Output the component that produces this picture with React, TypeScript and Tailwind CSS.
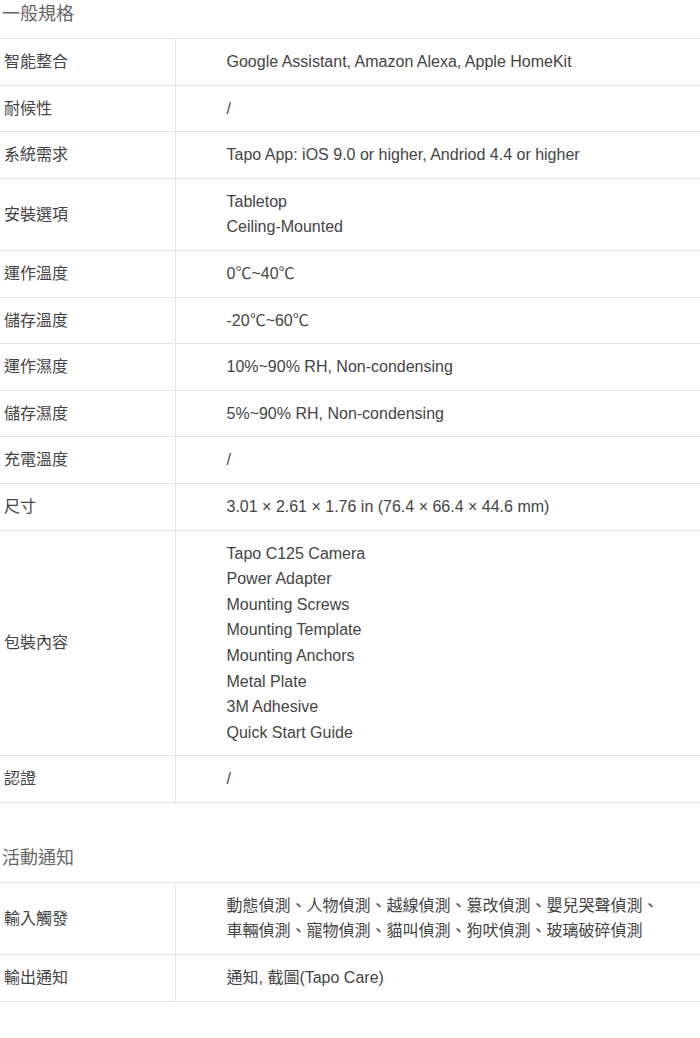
const FONT = '[font-family:"Liberation_Sans","Noto_Sans_CJK_TC",sans-serif]'

type Row = { label: string; value: string[] }

const general: Row[] = [
  { label: '智能整合', value: ['Google Assistant, Amazon Alexa, Apple HomeKit'] },
  { label: '耐候性', value: ['/'] },
  { label: '系統需求', value: ['Tapo App: iOS 9.0 or higher, Andriod 4.4 or higher'] },
  { label: '安裝選項', value: ['Tabletop', 'Ceiling-Mounted'] },
  { label: '運作溫度', value: ['0℃~40℃'] },
  { label: '儲存溫度', value: ['-20℃~60℃'] },
  { label: '運作濕度', value: ['10%~90% RH, Non-condensing'] },
  { label: '儲存濕度', value: ['5%~90% RH, Non-condensing'] },
  { label: '充電溫度', value: ['/'] },
  { label: '尺寸', value: ['3.01 × 2.61 × 1.76 in (76.4 × 66.4 × 44.6 mm)'] },
  {
    label: '包裝內容',
    value: [
      'Tapo C125 Camera',
      'Power Adapter',
      'Mounting Screws',
      'Mounting Template',
      'Mounting Anchors',
      'Metal Plate',
      '3M Adhesive',
      'Quick Start Guide',
    ],
  },
  { label: '認證', value: ['/'] },
]

const events: Row[] = [
  {
    label: '輸入觸發',
    value: [
      '動態偵測、人物偵測、越線偵測、篡改偵測、嬰兒哭聲偵測、',
      '車輛偵測、寵物偵測、貓叫偵測、狗吠偵測、玻璃破碎偵測',
    ],
  },
  { label: '輸出通知', value: ['通知, 截圖(Tapo Care)'] },
]

function SpecTable({ title, rows }: { title: string; rows: Row[] }) {
  return (
    <section>
      <h3 className="text-[18px] leading-[28px] text-[#666] pl-[2px] pb-[10px] font-normal">{title}</h3>
      <table className="w-full border-collapse">
        <tbody>
          {rows.map(row => (
            <tr key={row.label} className="border-t border-b border-[#e5e5e5]">
              <td className="w-[175px] border-r border-[#e5e5e5] pl-[4px] py-[10px] text-[16px] leading-[25.6px] text-[#444] align-middle">
                {row.label}
              </td>
              <td className="pl-[51px] py-[10px] text-[16px] leading-[25.6px] text-[#444] align-middle">
                {row.value.map(v => (
                  <div key={v}>{v}</div>
                ))}
              </td>
            </tr>
          ))}
        </tbody>
      </table>
    </section>
  )
}

export default function App() {
  return (
    <div className={`w-[700px] bg-white ${FONT}`}>
      <SpecTable title="一般規格" rows={general} />
      <div className="mt-[41px]">
        <SpecTable title="活動通知" rows={events} />
      </div>
    </div>
  )
}
